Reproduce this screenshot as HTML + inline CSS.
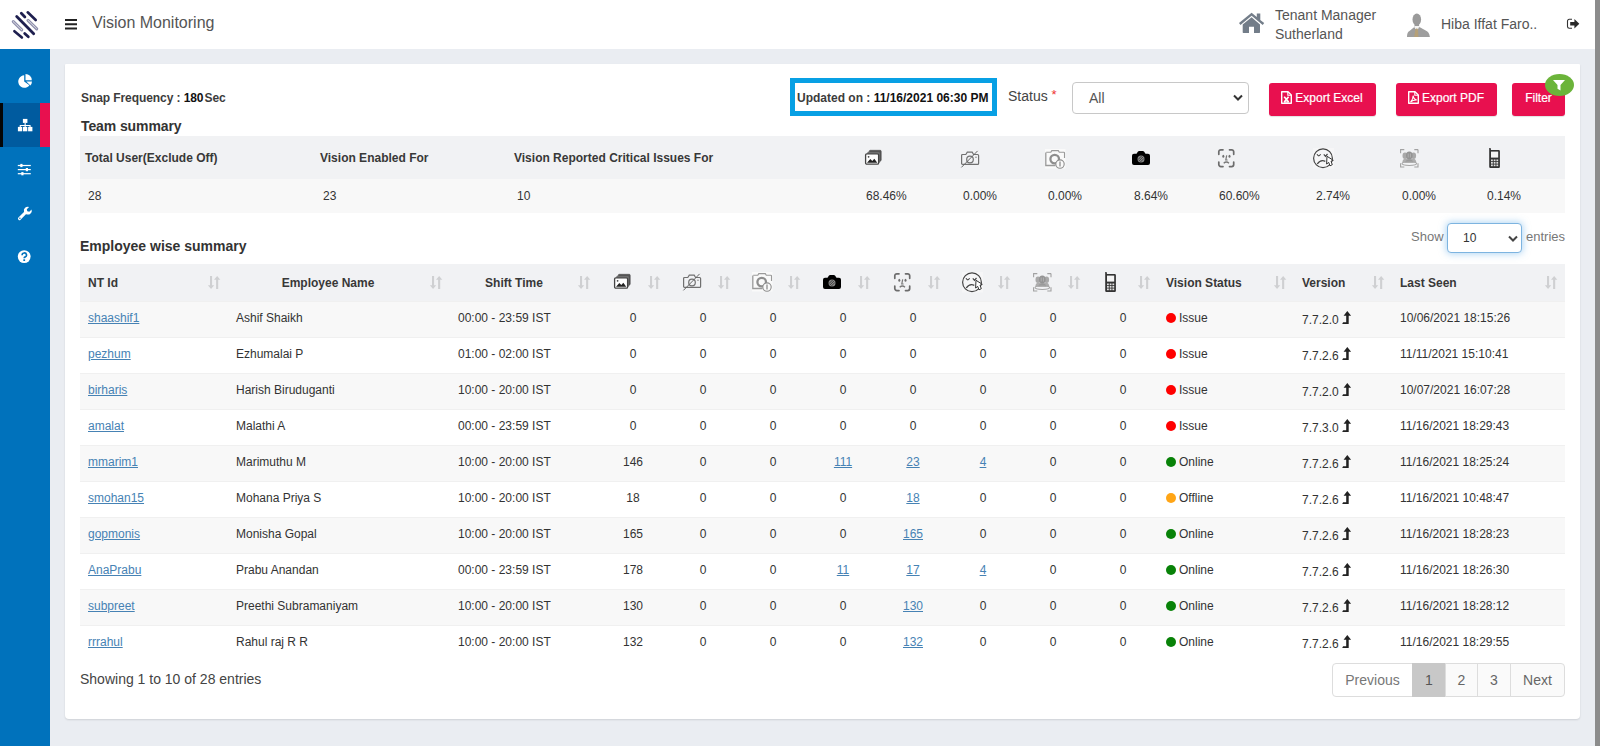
<!DOCTYPE html>
<html>
<head>
<meta charset="utf-8">
<title>Vision Monitoring</title>
<style>
*{box-sizing:border-box;margin:0;padding:0}
html,body{width:1600px;height:746px;overflow:hidden}
body{font-family:"Liberation Sans",sans-serif;background:#eaedf2;color:#333;position:relative;font-size:12px}
.abs{position:absolute}
svg{overflow:visible}
#topbar{position:absolute;left:0;top:0;width:1595px;height:49px;background:#fff}
#sidebar{position:absolute;left:0;top:49px;width:50px;height:697px;background:#0072bc}
#scroll{position:absolute;left:1595px;top:0;width:5px;height:746px;background:#8c8c8c}
#card{position:absolute;left:65px;top:64px;width:1515px;height:655px;background:#fff;border-radius:1px 1px 4px 4px;box-shadow:0 1px 2px rgba(0,0,0,.12)}
.title{position:absolute;left:92px;top:13px;font-size:16px;color:#555;line-height:20px}
.tm{position:absolute;left:1275px;font-size:14px;color:#555;line-height:16px;white-space:nowrap}
.b{font-weight:bold}
a{color:#4682b4;text-decoration:underline}
.btn{position:absolute;top:83px;height:33px;-webkit-text-stroke:.2px #fff;background:#e8104f;border-radius:3px;color:#fff;font-size:12px;line-height:30px;text-align:center;box-shadow:0 1px 1px rgba(0,0,0,.12);white-space:nowrap}
.sel{position:absolute;border:1px solid #c8c8c8;border-radius:4px;background:#fff}
table{border-collapse:collapse;table-layout:fixed;position:absolute}
td,th{font-size:12px;color:#333;text-align:left;font-weight:normal;white-space:nowrap;overflow:visible;vertical-align:middle}
#emp{left:80px;top:264px;width:1485px}
#emp th{height:37px;background:#f1f2f4;font-weight:bold;color:#383838;padding-left:8px;padding-top:2px;position:relative}
#emp td{height:36px;padding-left:8px;padding-bottom:2px;border-top:1px solid #f0f0f0}
#emp tr.o td{background:#f8f8f8}
#emp td.c,#emp th.c{text-align:center;padding-left:0}
.dot{display:inline-block;width:10px;height:10px;border-radius:50%;vertical-align:-1px;margin-left:-.5px;margin-right:3.5px}
.r{background:#f00}.g{background:#088208}.y{background:#ffa516}
.srt{position:absolute;right:8px;top:12px}
.ver{position:relative;top:1.5px}
.up{margin-left:3px;vertical-align:-2px}
.pg{position:absolute;top:663px;height:34px;border:1px solid #ddd;background:#fafafa;font-size:14px;color:#666;line-height:32px;text-align:center}
</style>
</head>
<body>
<svg width="0" height="0" style="position:absolute">
<defs>
<clipPath id="lgc"><ellipse cx="13.3" cy="14" rx="13.3" ry="14"/></clipPath>
<symbol id="logo" overflow="visible">
<g transform="translate(1.7,6)" stroke-linecap="round" fill="none">
<path d="M16 1.3L24 9" stroke="#1e1f4f" stroke-width="2.6"/>
<path d="M9.6 2.3L13.2 5.9" stroke="#1e1f4f" stroke-width="2.8"/>
<path d="M5 5.6L22 22.8" stroke="#1e1f4f" stroke-width="2.8"/>
<path d="M16.3 9.3L25 17.8" stroke="#8f90ad" stroke-width="3.100"/>
<path d="M16.3 9.3L25 17.8" stroke="#fff" stroke-width=".8" stroke-dasharray=".9 .9"/>
<path d="M1.6 10.7L10 18.8" stroke="#8f90ad" stroke-width="3.100"/>
<path d="M1.6 10.7L10 18.8" stroke="#fff" stroke-width=".8" stroke-dasharray=".9 .9"/>
<path d="M2.7 20.2L10.2 26.5" stroke="#1e1f4f" stroke-width="2.6"/>
<path d="M13 22.5L16.6 25.8" stroke="#1e1f4f" stroke-width="2.8"/>
</g>
</symbol>
<symbol id="home" overflow="visible">
<g transform="translate(1,1.7)" fill="#737d89">
<path d="M12.6 4.6L3.7 11.9V19.6a.6.6 0 0 0 .6.6H10V14h5v6.200h5.400a.6.6 0 0 0 .6-.6V11.900z"/>
<path d="M12.6 0L0 10.400l1.500 1.800L12.600 3l11.100 9.200l1.500-1.800L21.300 7.200V.8H17.800V4.300z"/>
</g>
</symbol>
<symbol id="avatar" overflow="visible">
<g transform="translate(1,1.400)">
<ellipse cx="9.800" cy="6" rx="4.300" ry="6" fill="#9a9a9a"/>
<path d="M7.500 10h4.600v4.500H7.500z" fill="#9a9a9a"/>
<path d="M0 23.500c0-3.500.8-5.300 2.500-6L7.300 13.700l2.500 3.500l2.600-3.700l6.300 3.600c2.500 1 3.600 2.800 4.200 6.400z" fill="#9e9e9e"/>
<path d="M7.400 13.900l2.400 2.600l2.500-2.800l-.3-1H7.600z" fill="#f4f4f4"/>
<path d="M8.300 16.200l1-1.200h1l.7 1.200l.4 7.300H7.200z" fill="#b5a078"/>
</g>
</symbol>
<symbol id="logout" overflow="visible">
<g transform="translate(0,.8)">
<path d="M5 .5H2.200A1.700 1.700 0 0 0 .5 2.200V7.800A1.700 1.700 0 0 0 2.200 9.500H5" fill="none" stroke="#333" stroke-width="1.100"/>
<path d="M3.200 3.300H7.400V.2L12.300 5L7.400 9.800V6.700H3.200z" fill="#2a2a2a"/>
</g>
</symbol>
<symbol id="s-pie" overflow="visible">
<path d="M6.200 1.300A6.200 6.200 0 1 0 11.400 11.200L6.200 7.500z" fill="#fff"/>
<path d="M7.500 0V6.300H13.800A6.300 6.300 0 0 0 7.500 0z" fill="#fff"/>
<path d="M8.300 7.500H14a6.200 6.200 0 0 1-1.700 4z" fill="#fff"/>
</symbol>
<symbol id="s-org" overflow="visible">
<g transform="translate(.9,-.1)" fill="#fff">
<rect x="5" y="0" width="4.500" height="4"/>
<rect x="0" y="8" width="4.300" height="4.400"/>
<rect x="5.100" y="8" width="4.300" height="4.400"/>
<rect x="10.200" y="8" width="4.300" height="4.400"/>
<path d="M6.700 4h1.100v2h4.900v2h-1.100V7H7.800v1H6.700V7H2.900v1H1.800V6h4.900z"/>
</g>
</symbol>
<symbol id="s-sld" overflow="visible">
<g transform="translate(-.2,.9)" fill="#fff">
<rect x="0" y="1" width="13" height="1.200"/><rect x="2.500" y="0" width="2.200" height="3.200"/>
<rect x="0" y="5.100" width="13" height="1.200"/><rect x="8" y="4.100" width="2.200" height="3.200"/>
<rect x="0" y="9.200" width="13" height="1.200"/><rect x="3.500" y="8.200" width="2.200" height="3.200"/>
</g>
</symbol>
<symbol id="s-wr" overflow="visible">
<g transform="translate(-.2,.6)">
<path d="M1.700 12L8 5.700" stroke="#fff" stroke-width="3" stroke-linecap="round" fill="none"/>
<path d="M13.800 2.800L11.500 5.100L9.500 4.600L9 2.600L11.300.3A4 4 0 0 0 6.200 5.200L8.800 7.800A4 4 0 0 0 13.800 2.800z" fill="#fff"/>
<circle cx="2.100" cy="11.600" r=".7" fill="#0072bc"/>
</g>
</symbol>
<symbol id="s-q" overflow="visible">
<circle cx="6.200" cy="6.600" r="6.400" fill="#fff"/>
<path d="M4.100 5.200A2.200 2.100 0 1 1 6.900 7.100Q6.200 7.400 6.200 8.300" fill="none" stroke="#0072bc" stroke-width="1.700"/>
<rect x="5.300" y="9.300" width="1.800" height="1.700" fill="#0072bc"/>
</symbol>
<symbol id="f-xls" overflow="visible">
<path d="M.7.700H7L10.300 4V12.300H.7z" fill="none" stroke="#fff" stroke-width="1.400" stroke-linejoin="round"/>
<path d="M6.800 .8V4.200H10.200" fill="none" stroke="#fff" stroke-width="1.100"/>
<path d="M3.200 5.800L7.600 11M7.600 5.800L3.200 11" stroke="#fff" stroke-width="1.700"/><path d="M3 11H7.800" stroke="#fff" stroke-width="1.200"/>
</symbol>
<symbol id="f-pdf" overflow="visible">
<path d="M.7.700H7L10.300 4V12.300H.7z" fill="none" stroke="#fff" stroke-width="1.400" stroke-linejoin="round"/>
<path d="M6.800 .8V4.200H10.200" fill="none" stroke="#fff" stroke-width="1.100"/>
<path d="M2.500 11C3.800 9.500 5.300 6.500 5.100 4.600C5.500 7 7.200 8.700 8.800 9C6.500 8.900 3.800 9.800 2.500 11z" fill="none" stroke="#fff" stroke-width="1.100"/>
</symbol>
<symbol id="sort" overflow="visible">
<g fill="#cfd0d2">
<path d="M2 0H4.100V9.300H6.200L3.050 13L-.1 9.300H2z"/>
<path d="M8.100 13H10.200V3.700H12.300L9.150 0L6 3.700H8.100z"/>
</g>
</symbol>
<symbol id="up" overflow="visible">
<path d="M5.300 0L9.100 4.800H6.700V12.900H.2L1.100 11.300H4.200V4.800H1.600z" fill="#222"/>
</symbol>
<!-- column icons -->
<symbol id="i-img" overflow="visible">
<path d="M4.300 2.500V1.300A1 1 0 0 1 5.300.3H15.200A1 1 0 0 1 16.200 1.300V10A1 1 0 0 1 15.200 11H14" fill="#555" stroke="#4a4a4a" stroke-width=".6"/>
<path d="M2.600 4V2.900A1 1 0 0 1 3.600 1.900H14A1 1 0 0 1 15 2.900V11.500A1 1 0 0 1 14 12.500H13" fill="#777" stroke="#555" stroke-width=".5"/>
<rect x=".6" y="3.800" width="13" height="10.400" rx="1.200" fill="#fff" stroke="#444" stroke-width="1.300"/>
<circle cx="3.600" cy="6.800" r=".9" fill="#444"/>
<path d="M2 12.700L5.300 9L7.300 11L9.300 8.700L12.300 12.700z" fill="#222"/>
</symbol>
<symbol id="i-noc" overflow="visible">
<path d="M1.600 4.500H4.800L6.300 2.200H11.200L12.600 4.500H16.600A1 1 0 0 1 17.600 5.500V13.400A1 1 0 0 1 16.600 14.400H1.600A1 1 0 0 1 .6 13.400V5.500A1 1 0 0 1 1.600 4.500z" fill="none" stroke="#707070" stroke-width="1.200"/>
<circle cx="9" cy="9.500" r="3.300" fill="none" stroke="#707070" stroke-width="1.200"/>
<circle cx="15" cy="7.200" r=".7" fill="#777"/>
<path d="M.4 17.400L16.600 .9" stroke="#666" stroke-width="1"/>
</symbol>
<symbol id="i-cinfo" overflow="visible">
<rect x="0" y="0" width="20.500" height="19.500" fill="#fafafa"/>
<path d="M1.200 3.300H5.800L6.800 1.600H13.300L14.300 3.300H18.800A.7.700 0 0 1 19.500 4V9" fill="none" stroke="#9a9a9a" stroke-width="1.100"/>
<path d="M.8 3.500V16.500H10.500" fill="none" stroke="#9a9a9a" stroke-width="1.300"/>
<circle cx="9.700" cy="10.100" r="4.300" fill="none" stroke="#8e8e8e" stroke-width="2.300"/>
<circle cx="15" cy="15.100" r="4.200" fill="#fafafa" stroke="#8e8e8e" stroke-width="1.100"/>
<path d="M15 12.600V17.600" stroke="#8e8e8e" stroke-width="1.300"/>
</symbol>
<symbol id="i-bcam" overflow="visible">
<path d="M2 2.800H4.500L6 .6Q6.400 0 7.200 0H10.800Q11.600 0 12 .6L13.500 2.800H16A2 2 0 0 1 18 4.800V12A2 2 0 0 1 16 14H2A2 2 0 0 1 0 12V4.800A2 2 0 0 1 2 2.800z" fill="#000"/>
<circle cx="9" cy="7.900" r="3.500" fill="#8a8a8a"/>
<path d="M6.800 10.100L11.200 5.700M6 8.600L9.700 4.900M8.300 11.100L12 7.400" stroke="#2a2a2a" stroke-width=".8"/>
</symbol>
<symbol id="i-face" overflow="visible">
<g fill="none" stroke="#6c6c6c" stroke-width="1.700" stroke-linecap="round">
<path d="M.8 5.300V2.800A2 2 0 0 1 2.800.8H5"/>
<path d="M11.500 .8H13.700A2 2 0 0 1 15.700 2.800V5.300"/>
<path d="M.8 13V15.600A2 2 0 0 0 2.800 17.600H5"/>
<path d="M11.500 17.600H13.700A2 2 0 0 0 15.700 15.600V13"/>
</g>
<ellipse cx="5.300" cy="7.300" rx="1" ry="1.500" fill="#707070"/><ellipse cx="11.500" cy="7.300" rx="1" ry="1.500" fill="#707070"/>
<path d="M8.700 6.300L7.800 11H9.600" fill="none" stroke="#777" stroke-width="1.200"/>
<path d="M5.700 14.200Q8.400 11.700 11 14.200" fill="none" stroke="#777" stroke-width="1.300"/>
</symbol>
<symbol id="i-sad" overflow="visible">
<rect x="0" y="0" width="21" height="20.500" fill="#f6f6f7"/>
<circle cx="10" cy="10.200" r="9.400" fill="none" stroke="#444" stroke-width="1.200"/>
<path d="M4 6.300Q5.800 9.300 7.600 6.300M10.800 6.300L12.500 8.300L14.500 6" fill="none" stroke="#444" stroke-width="1.200"/>
<path d="M4.300 16Q7.500 11.300 12.300 13.300" fill="none" stroke="#444" stroke-width="1.300"/>
<path d="M14 8.300L20.300 12.300L18 13.200L19.300 16.700L17 17.800L15.700 14.400L13.600 16z" fill="#fff" stroke="#333" stroke-width="1"/>
</symbol>
<symbol id="i-ppl" overflow="visible">
<g fill="none" stroke="#a2a2a2" stroke-width="1.100">
<path d="M.6 4.300V.6H4.300M14.300 .6H18M18 .6V4.300M.6 14.300V18H4.300M14.300 18H18V14.300"/>
</g>
<ellipse cx="5" cy="6.800" rx="2.500" ry="3.200" fill="#a9a9a9"/>
<ellipse cx="13.600" cy="6.800" rx="2.500" ry="3.200" fill="#a9a9a9"/>
<path d="M2.300 13.800Q2.500 10 5.300 9.800H13.300Q16.100 10 16.300 13.800z" fill="#adadad"/>
<ellipse cx="9.300" cy="6.600" rx="3.300" ry="4" fill="#949494"/>
<path d="M5.300 13.300Q5.600 10.400 9.300 10.400Q13 10.400 13.300 13.300z" fill="#9a9a9a"/>
<path d="M8.200 4.500V8.500M10.400 4.500V8.500" stroke="#c4c4c4" stroke-width=".6"/>
<ellipse cx="9.300" cy="14.600" rx="7.300" ry="1.900" fill="none" stroke="#a6a6a6" stroke-width="1.100"/>
</symbol>
<symbol id="i-ph" overflow="visible">
<path d="M.2 0H1.600L2 2H9.700A1.200 1.200 0 0 1 10.900 3.200V18.800A1.200 1.200 0 0 1 9.700 20H1.400A1.200 1.200 0 0 1 .2 18.800z" fill="#333"/>
<rect x="2" y="3.600" width="7.200" height="6" fill="#f4f4f4"/>
<g fill="#e0e0e0">
<rect x="2" y="11.500" width="1.800" height="1.700"/><rect x="4.700" y="11.500" width="1.800" height="1.700"/><rect x="7.400" y="11.500" width="1.800" height="1.700"/>
<rect x="2" y="14" width="1.800" height="1.700"/><rect x="4.700" y="14" width="1.800" height="1.700"/><rect x="7.400" y="14" width="1.800" height="1.700"/>
<rect x="2" y="16.500" width="1.800" height="1.700"/><rect x="4.700" y="16.500" width="1.800" height="1.700"/><rect x="7.400" y="16.500" width="1.800" height="1.700"/>
</g>
</symbol>
</defs>
</svg>

<div id="topbar"></div>
<div id="sidebar"></div>
<div id="scroll"></div>
<div id="card"></div>

<svg class="abs" style="left:10px;top:5px" width="30" height="36"><use href="#logo"/></svg>
<svg class="abs" style="left:65px;top:18.7px" width="12" height="11"><path d="M0 1h12M0 5.3h12M0 9.6h12" stroke="#222" stroke-width="2"/></svg>
<div class="title">Vision Monitoring</div>
<svg class="abs" style="left:1238px;top:11px" width="27" height="22"><use href="#home"/></svg>
<div class="tm" style="top:7px">Tenant Manager</div>
<div class="tm" style="top:26px">Sutherland</div>
<svg class="abs" style="left:1406px;top:12px" width="24" height="26"><use href="#avatar"/></svg>
<div class="tm" style="left:1441px;top:16px">Hiba Iffat Faro..</div>
<svg class="abs" style="left:1567px;top:18px" width="13" height="12"><use href="#logout"/></svg>

<div class="abs" style="left:0;top:103px;width:50px;height:44px;background:#005b9f"></div>
<div class="abs" style="left:0;top:103px;width:3px;height:44px;background:#050505"></div>
<div class="abs" style="left:40px;top:103px;width:10px;height:44px;background:#e8104f"></div>
<svg class="abs" style="left:18px;top:73.600px" width="14" height="14"><use href="#s-pie"/></svg>
<svg class="abs" style="left:17px;top:119px" width="16" height="13"><use href="#s-org"/></svg>
<svg class="abs" style="left:18px;top:163px" width="14" height="13"><use href="#s-sld"/></svg>
<svg class="abs" style="left:18px;top:206px" width="14" height="14"><use href="#s-wr"/></svg>
<svg class="abs" style="left:18px;top:250px" width="14" height="14"><use href="#s-q"/></svg>

<div class="abs b" style="left:81px;top:91px;line-height:14px;color:#3c3c3c;letter-spacing:-.08px">Snap Frequency : <span style="color:#111">180</span><span style="margin-left:1px">Sec</span></div>
<div class="abs b" style="left:790px;top:78px;width:207px;height:38px;border:5px solid #08a0e4;line-height:30px;padding-left:2px;white-space:nowrap;color:#3c3c3c">Updated on : <span style="color:#111">11/16/2021 06:30 PM</span></div>
<div class="abs" style="left:1008px;top:88px;font-size:14px;color:#444;line-height:16px">Status <span style="color:#e33;font-size:13px;position:relative;top:-2px">*</span></div>
<div class="sel" style="left:1072px;top:82px;width:177px;height:32px"><span class="abs" style="left:16px;top:7.3px;font-size:14px;color:#555;line-height:16px">All</span><svg class="abs" style="left:160px;top:11px" width="10" height="8"><path d="M1 1.5l4 4 4-4" fill="none" stroke="#333" stroke-width="2"/></svg></div>
<div class="btn" style="left:1269px;width:107px"><svg style="vertical-align:-2px;margin-right:3px;margin-left:-1px" width="11" height="13"><use href="#f-xls"/></svg>Export Excel</div>
<div class="btn" style="left:1396px;width:101px"><svg style="vertical-align:-2px;margin-right:3px;margin-left:-1px" width="11" height="13"><use href="#f-pdf"/></svg>Export PDF</div>
<div class="btn" style="left:1512px;width:53px">Filter</div>
<div class="abs" style="left:1545px;top:74px;width:29px;height:22px;border-radius:50%;background:#6bb43a"></div>
<svg class="abs" style="left:1553px;top:80px" width="12" height="11"><path d="M0 0h12L7.5 5v5.5l-3-1.8V5z" fill="#fff"/></svg>
<div class="abs b" style="left:81px;top:118px;font-size:14px;line-height:16px;letter-spacing:-.1px">Team summary</div>
<div class="abs" style="left:80px;top:136px;width:1485px;height:43px;background:#f1f2f4"></div><div class="abs" style="left:80px;top:179px;width:1485px;height:34px;background:#f8f8f8"></div><div class="abs b" style="left:85px;top:151px;line-height:14px;color:#383838">Total User(Exclude Off)</div><div class="abs b" style="left:320px;top:151px;line-height:14px;color:#383838">Vision Enabled For</div><div class="abs b" style="left:514px;top:151px;line-height:14px;color:#383838">Vision Reported Critical Issues For</div><div class="abs" style="left:88px;top:189px;line-height:14px">28</div><div class="abs" style="left:323px;top:189px;line-height:14px">23</div><div class="abs" style="left:517px;top:189px;line-height:14px">10</div><div class="abs" style="left:866px;top:189px;line-height:14px">68.46%</div><div class="abs" style="left:963px;top:189px;line-height:14px">0.00%</div><div class="abs" style="left:1048px;top:189px;line-height:14px">0.00%</div><div class="abs" style="left:1134px;top:189px;line-height:14px">8.64%</div><div class="abs" style="left:1219px;top:189px;line-height:14px">60.60%</div><div class="abs" style="left:1316px;top:189px;line-height:14px">2.74%</div><div class="abs" style="left:1402px;top:189px;line-height:14px">0.00%</div><div class="abs" style="left:1487px;top:189px;line-height:14px">0.14%</div><svg class="abs" style="left:865px;top:150px" width="17" height="15"><use href="#i-img"/></svg><svg class="abs" style="left:961px;top:149.5px" width="20" height="18"><use href="#i-noc"/></svg><svg class="abs" style="left:1045px;top:148.7px" width="21" height="20"><use href="#i-cinfo"/></svg><svg class="abs" style="left:1132px;top:151px" width="19" height="15"><use href="#i-bcam"/></svg><svg class="abs" style="left:1218.3px;top:148.7px" width="17" height="19"><use href="#i-face"/></svg><svg class="abs" style="left:1312.7px;top:147.6px" width="22" height="21"><use href="#i-sad"/></svg><svg class="abs" style="left:1399.5px;top:148.8px" width="19" height="19"><use href="#i-ppl"/></svg><svg class="abs" style="left:1488.5px;top:148px" width="12" height="21"><use href="#i-ph"/></svg>

<div class="abs b" style="left:80px;top:238px;font-size:14px;line-height:16px">Employee wise summary</div>
<div class="abs" style="left:1411px;top:228.7px;font-size:13px;color:#777;line-height:16px">Show</div>
<div class="sel" style="left:1447px;top:223px;width:75px;height:30px;border-color:#7db4e0;box-shadow:0 0 7px 1px rgba(102,175,233,.5)"><span class="abs" style="left:15px;top:7px;font-size:12px;color:#333;line-height:14px">10</span><svg class="abs" style="left:59.5px;top:11px" width="10" height="8"><path d="M1 1.5l4 4 4-4" fill="none" stroke="#444" stroke-width="2"/></svg></div>
<div class="abs" style="left:1526px;top:228.7px;font-size:13px;color:#777;line-height:16px">entries</div>
<table id="emp"><colgroup><col style="width:148px"><col style="width:222px"><col style="width:148px"><col style="width:70px"><col style="width:70px"><col style="width:70px"><col style="width:70px"><col style="width:70px"><col style="width:70px"><col style="width:70px"><col style="width:70px"><col style="width:136px"><col style="width:98px"><col style="width:173px"></colgroup>
<tr><th>NT Id<svg class="srt" width="12" height="13"><use href="#sort"/></svg></th><th class="c"><span style="position:relative;left:-11px">Employee Name</span><svg class="srt" width="12" height="13"><use href="#sort"/></svg></th><th class="c"><span style="position:relative;left:-10px">Shift Time</span><svg class="srt" width="12" height="13"><use href="#sort"/></svg></th><th><svg class="abs" style="left:16px;top:10px" width="17" height="15"><use href="#i-img"/></svg><svg class="srt" width="12" height="13"><use href="#sort"/></svg></th><th><svg class="abs" style="left:15px;top:9px" width="20" height="18"><use href="#i-noc"/></svg><svg class="srt" width="12" height="13"><use href="#sort"/></svg></th><th><svg class="abs" style="left:14px;top:8px" width="21" height="20"><use href="#i-cinfo"/></svg><svg class="srt" width="12" height="13"><use href="#sort"/></svg></th><th><svg class="abs" style="left:15px;top:11px" width="19" height="15"><use href="#i-bcam"/></svg><svg class="srt" width="12" height="13"><use href="#sort"/></svg></th><th><svg class="abs" style="left:16px;top:9px" width="17" height="19"><use href="#i-face"/></svg><svg class="srt" width="12" height="13"><use href="#sort"/></svg></th><th><svg class="abs" style="left:14px;top:8px" width="22" height="21"><use href="#i-sad"/></svg><svg class="srt" width="12" height="13"><use href="#sort"/></svg></th><th><svg class="abs" style="left:15px;top:9px" width="19" height="19"><use href="#i-ppl"/></svg><svg class="srt" width="12" height="13"><use href="#sort"/></svg></th><th><svg class="abs" style="left:17px;top:8px" width="12" height="21"><use href="#i-ph"/></svg><svg class="srt" width="12" height="13"><use href="#sort"/></svg></th><th>Vision Status<svg class="srt" width="12" height="13"><use href="#sort"/></svg></th><th>Version<svg class="srt" width="12" height="13"><use href="#sort"/></svg></th><th>Last Seen<svg class="srt" width="12" height="13"><use href="#sort"/></svg></th></tr>
<tr class="o"><td><a>shaashif1</a></td><td>Ashif Shaikh</td><td>00:00 - 23:59 IST</td><td class="c">0</td><td class="c">0</td><td class="c">0</td><td class="c">0</td><td class="c">0</td><td class="c">0</td><td class="c">0</td><td class="c">0</td><td><span class="dot r"></span>Issue</td><td><span class="ver">7.7.2.0</span><svg class="up" width="9" height="13"><use href="#up"/></svg></td><td>10/06/2021 18:15:26</td></tr>
<tr class="e"><td><a>pezhum</a></td><td>Ezhumalai P</td><td>01:00 - 02:00 IST</td><td class="c">0</td><td class="c">0</td><td class="c">0</td><td class="c">0</td><td class="c">0</td><td class="c">0</td><td class="c">0</td><td class="c">0</td><td><span class="dot r"></span>Issue</td><td><span class="ver">7.7.2.6</span><svg class="up" width="9" height="13"><use href="#up"/></svg></td><td>11/11/2021 15:10:41</td></tr>
<tr class="o"><td><a>birharis</a></td><td>Harish Biruduganti</td><td>10:00 - 20:00 IST</td><td class="c">0</td><td class="c">0</td><td class="c">0</td><td class="c">0</td><td class="c">0</td><td class="c">0</td><td class="c">0</td><td class="c">0</td><td><span class="dot r"></span>Issue</td><td><span class="ver">7.7.2.0</span><svg class="up" width="9" height="13"><use href="#up"/></svg></td><td>10/07/2021 16:07:28</td></tr>
<tr class="e"><td><a>amalat</a></td><td>Malathi A</td><td>00:00 - 23:59 IST</td><td class="c">0</td><td class="c">0</td><td class="c">0</td><td class="c">0</td><td class="c">0</td><td class="c">0</td><td class="c">0</td><td class="c">0</td><td><span class="dot r"></span>Issue</td><td><span class="ver">7.7.3.0</span><svg class="up" width="9" height="13"><use href="#up"/></svg></td><td>11/16/2021 18:29:43</td></tr>
<tr class="o"><td><a>mmarim1</a></td><td>Marimuthu M</td><td>10:00 - 20:00 IST</td><td class="c">146</td><td class="c">0</td><td class="c">0</td><td class="c"><a>111</a></td><td class="c"><a>23</a></td><td class="c"><a>4</a></td><td class="c">0</td><td class="c">0</td><td><span class="dot g"></span>Online</td><td><span class="ver">7.7.2.6</span><svg class="up" width="9" height="13"><use href="#up"/></svg></td><td>11/16/2021 18:25:24</td></tr>
<tr class="e"><td><a>smohan15</a></td><td>Mohana Priya S</td><td>10:00 - 20:00 IST</td><td class="c">18</td><td class="c">0</td><td class="c">0</td><td class="c">0</td><td class="c"><a>18</a></td><td class="c">0</td><td class="c">0</td><td class="c">0</td><td><span class="dot y"></span>Offline</td><td><span class="ver">7.7.2.6</span><svg class="up" width="9" height="13"><use href="#up"/></svg></td><td>11/16/2021 10:48:47</td></tr>
<tr class="o"><td><a>gopmonis</a></td><td>Monisha Gopal</td><td>10:00 - 20:00 IST</td><td class="c">165</td><td class="c">0</td><td class="c">0</td><td class="c">0</td><td class="c"><a>165</a></td><td class="c">0</td><td class="c">0</td><td class="c">0</td><td><span class="dot g"></span>Online</td><td><span class="ver">7.7.2.6</span><svg class="up" width="9" height="13"><use href="#up"/></svg></td><td>11/16/2021 18:28:23</td></tr>
<tr class="e"><td><a>AnaPrabu</a></td><td>Prabu Anandan</td><td>00:00 - 23:59 IST</td><td class="c">178</td><td class="c">0</td><td class="c">0</td><td class="c"><a>11</a></td><td class="c"><a>17</a></td><td class="c"><a>4</a></td><td class="c">0</td><td class="c">0</td><td><span class="dot g"></span>Online</td><td><span class="ver">7.7.2.6</span><svg class="up" width="9" height="13"><use href="#up"/></svg></td><td>11/16/2021 18:26:30</td></tr>
<tr class="o"><td><a>subpreet</a></td><td>Preethi Subramaniyam</td><td>10:00 - 20:00 IST</td><td class="c">130</td><td class="c">0</td><td class="c">0</td><td class="c">0</td><td class="c"><a>130</a></td><td class="c">0</td><td class="c">0</td><td class="c">0</td><td><span class="dot g"></span>Online</td><td><span class="ver">7.7.2.6</span><svg class="up" width="9" height="13"><use href="#up"/></svg></td><td>11/16/2021 18:28:12</td></tr>
<tr class="e"><td><a>rrrahul</a></td><td>Rahul raj R R</td><td>10:00 - 20:00 IST</td><td class="c">132</td><td class="c">0</td><td class="c">0</td><td class="c">0</td><td class="c"><a>132</a></td><td class="c">0</td><td class="c">0</td><td class="c">0</td><td><span class="dot g"></span>Online</td><td><span class="ver">7.7.2.6</span><svg class="up" width="9" height="13"><use href="#up"/></svg></td><td>11/16/2021 18:29:55</td></tr>
</table>

<div class="abs" style="left:80px;top:671px;font-size:14px;color:#444;line-height:16px">Showing 1 to 10 of 28 entries</div>
<div class="pg" style="left:1332px;width:81px;border-radius:4px 0 0 4px;background:#fff;color:#777">Previous</div>
<div class="pg" style="left:1412px;width:34px;background:#c8c8c8;border-color:#c8c8c8;color:#555">1</div>
<div class="pg" style="left:1445px;width:33px">2</div>
<div class="pg" style="left:1477px;width:34px">3</div>
<div class="pg" style="left:1510px;width:55px;border-radius:0 4px 4px 0">Next</div>

</body>
</html>
